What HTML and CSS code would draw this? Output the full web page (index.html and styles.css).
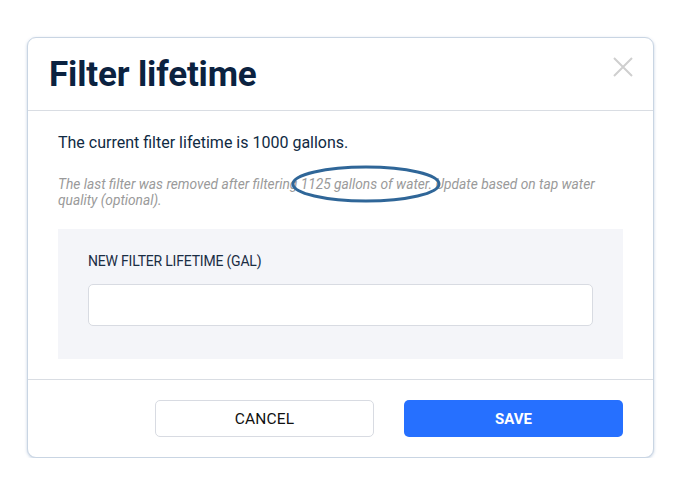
FILE: index.html
```html
<!DOCTYPE html>
<html>
<head>
<meta charset="utf-8">
<link rel="stylesheet" href="styles.css">
</head>
<body>
<div class="dialog">
  <div class="header">
    <h1 class="title">Filter lifetime</h1>
    <button class="close" aria-label="Close">
      <svg width="20" height="20" viewBox="0 0 20 20"><path d="M1 1L19 19M19 1L1 19" stroke="#cfcfcf" stroke-width="2" fill="none"/></svg>
    </button>
  </div>
  <div class="body">
    <p class="current">The current filter lifetime is 1000 gallons.</p>
    <p class="note">The last filter was removed after filtering <span class="circled">1125 gallons of water.<svg class="ellipse" width="152" height="40" viewBox="0 0 152 40"><ellipse cx="76" cy="20" rx="73" ry="17" fill="none" stroke="#2f6698" stroke-width="3"/></svg></span> Update based on tap water quality (optional).</p>
    <div class="panel">
      <label class="label">NEW FILTER LIFETIME (GAL)</label>
      <input class="input" type="text">
    </div>
  </div>
  <div class="footer">
    <button class="btn cancel">CANCEL</button>
    <button class="btn save">SAVE</button>
  </div>
</div>
</body>
</html>
```
FILE: styles.css
```css
* { box-sizing: border-box; }
html, body { margin: 0; padding: 0; background: #fff; }
body { font-family: Roboto, "Noto Sans", sans-serif; }
.dialog {
  margin: 37px 0 0 27px;
  width: 627px;
  height: 421px;
  border: 1px solid #c9d5e3;
  border-radius: 9px;
  box-shadow: 0 1px 3px rgba(120, 150, 190, 0.45);
  background: #fff;
  display: flex;
  flex-direction: column;
}
.header {
  height: 73px;
  flex: none;
  border-bottom: 1px solid #d9dde3;
  display: flex;
  align-items: center;
  justify-content: space-between;
  padding: 0 20px 0 21px;
}
.title {
  margin: 0;
  font-size: 35px;
  line-height: 40px;
  font-weight: 700;
  color: #0b2240;
  letter-spacing: -0.15px;
  position: relative;
  top: 1px;
}
.close {
  border: 0;
  background: none;
  padding: 0;
  width: 20px;
  height: 20px;
  margin-top: -14px;
  cursor: pointer;
}
.close svg { display: block; }
.body {
  padding: 22px 30px 20px 30px;
  flex: none;
  border-bottom: 1px solid #d9dde3;
}
.current {
  margin: 0;
  font-size: 16px;
  color: #102a43;
  line-height: 20px;
}
.note {
  margin: 23px 0 0 0;
  font-size: 13.75px;
  font-style: italic;
  color: #9a9a9a;
  line-height: 16px;
}
.circled { position: relative; }
.ellipse {
  position: absolute;
  left: -11px;
  top: -12px;
  pointer-events: none;
}
.panel {
  margin-top: 21px;
  background: #f4f5f9;
  padding: 23px 30px 33px 30px;
  display: flex;
  flex-direction: column;
}
.label {
  font-size: 14px;
  color: #1a2d44;
  line-height: 18px;
  letter-spacing: -0.2px;
}
.input {
  margin-top: 14px;
  height: 42px;
  width: 505px;
  border: 1px solid #d8dbe2;
  border-radius: 5px;
  background: #fff;
}
.footer {
  flex: 1;
  display: flex;
  align-items: flex-start;
  justify-content: flex-end;
  gap: 30px;
  padding: 20px 30px 0 0;
}
.btn {
  width: 219px;
  height: 37px;
  border-radius: 5px;
  font-family: Roboto, sans-serif;
  font-size: 15px;
  cursor: pointer;
}
.cancel {
  background: #fff;
  border: 1px solid #d8dbe2;
  color: #111;
  font-weight: 400;
  font-size: 15.5px;
  letter-spacing: 0.2px;
}
.save {
  background: #2670ff;
  border: 0;
  color: #fff;
  font-weight: 700;
}
```
